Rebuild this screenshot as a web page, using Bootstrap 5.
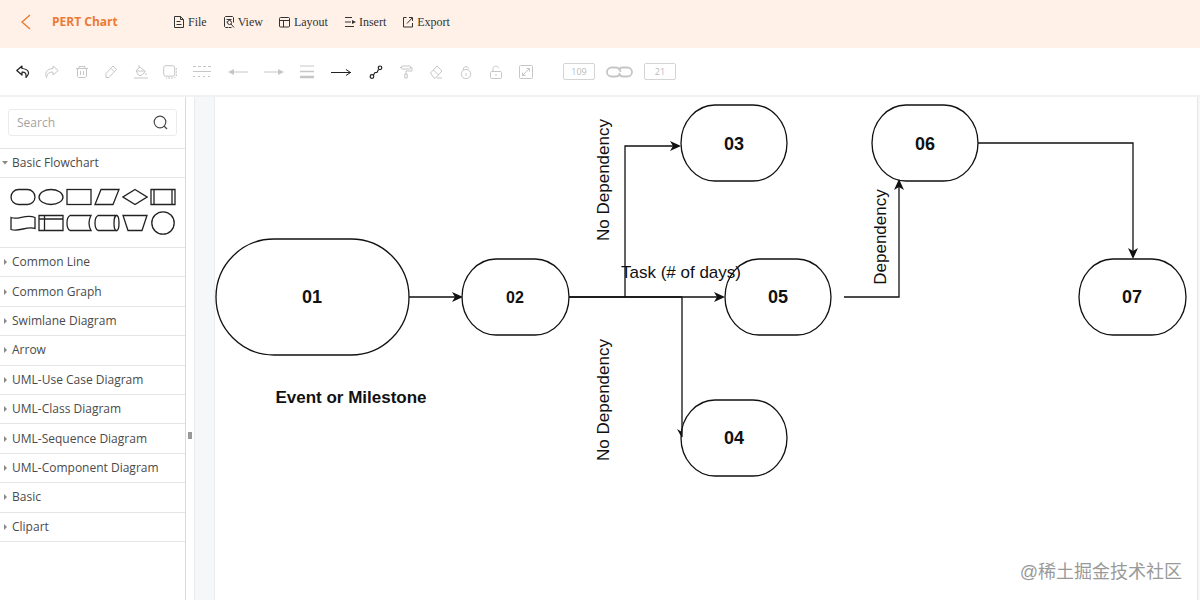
<!DOCTYPE html>
<html lang="en">
<head>
<meta charset="utf-8">
<meta name="viewport" content="width=device-width, initial-scale=1">
<title>PERT Chart</title>
<link href="https://cdn.jsdelivr.net/npm/bootstrap@5.3.0/dist/css/bootstrap.min.css" rel="stylesheet">
<style>
  body { font-family: "Open Sans", "Noto Sans", sans-serif; font-size: 12px; color: #4a4a4a; }
  button { background: none; border: 0; padding: 0; color: inherit; }
  svg { display: block; flex-shrink: 0; fill: none; stroke: currentColor; }
  .app-head { height: 48px; background: #fff1e8; padding: 0 20px 4px; }
  .brand-link { color: #ec7a34; font: bold 12px/16px "Open Sans", sans-serif; gap: 20px; width: 153px; }
  .menu-item { font: 12px/16px "Liberation Serif", serif; color: #333; gap: 3px; }
  .menu-row { gap: 16px; }
  .tool-row { height: 49px; padding-left: 16px; border-bottom: 2px solid #f0f1f2; color: #c6c6c6; }
  .group-edit { width: 161px; margin-right: 15px; }
  .group-line { width: 159px; margin-right: 18px; }
  .group-style { width: 164px; margin-right: 30px; }
  .group-size { gap: 11px; }
  .is-on { color: #222; }
  .size-box { width: 32px; height: 17px; padding: 0; text-align: center; font-size: 9px; color: #bbb; border: 1px solid #d4d4d4; border-radius: 2px; background: #fff; }
  .side { width: 186px; border-right: 1px solid #d9d9d9; }
  .search-wrap { padding: 12px 8px; border-bottom: 1px solid #e4e4e4; }
  .search-box { height: 27px; border: 1px solid #ebebeb; border-radius: 3px; padding: 0 8px; }
  .search-box input { font-size: 12px; border: 0; outline: 0; min-width: 0; color: #444; }
  .search-box input::placeholder { color: #a3a3a3; }
  .section-btn { border-bottom: 1px solid #e6e6e6; gap: 4px; padding-left: 2px; text-align: left; line-height: 16px; }
  .section-open { height: 29px; }
  .section-list { height: 294px; }
  .palette { display: grid; grid-template-columns: repeat(6, 28px); grid-auto-rows: 26px; padding: 6px 9px 11px; border-bottom: 1px solid #e6e6e6; color: #222; stroke-width: 1.3; }
  .palette button { display: grid; place-items: center; }
  .caret { width: 6px; height: 6px; fill: #888; stroke: none; }
  .splitter { width: 8px; }
  .grip { width: 4px; height: 7px; background: #999; }
  .above { flex: 27; }
  .below { flex: 13; }
  .ruler { width: 21px; background: #f5f7f9; border-left: 1px solid #e9ebee; border-right: 1px solid #eaecee; }
  .board { background: #fff; min-width: 0; border-right: 1px solid #e6e6e6; }
  .edge { width: 2px; background: #f7f7f7; }
  .diagram { font-family: "Liberation Sans", Arial, sans-serif; font-size: 17px; stroke: #111; stroke-width: 1.3; }
  .diagram text { fill: #111; stroke: none; text-anchor: middle; }
  .diagram .num { font-weight: bold; font-size: 18px; }
  .diagram .num-sm { font-weight: bold; font-size: 16px; }
  .diagram .tip { fill: #111; stroke: none; }
  .credit { right: 15px; bottom: 15px; font: 18px/26px "Liberation Sans", "Noto Sans CJK SC", sans-serif; color: #999; }
</style>
</head>
<body class="vh-100 d-flex flex-column overflow-hidden">

<header class="app-head d-flex align-items-center flex-shrink-0">
  <a href="#" class="brand-link d-flex align-items-center text-decoration-none">
    <svg width="12" height="16" stroke-width="1.4"><path d="M10 1 2 8l8 7"/></svg>PERT Chart
  </a>
  <nav class="menu-row d-flex align-items-center">
    <button class="menu-item d-flex align-items-center"><svg width="12" height="12"><path d="M1.5 .5h6l3 3v8h-9zM7.500 .5v3h3M3.500 5.500h4M3.500 8.500h5"/></svg>File</button>
    <button class="menu-item d-flex align-items-center"><svg width="12" height="12"><path d="M5 11.500H2.500l-1-1v-9l1-1h7l1 1v5M3.500 3.500h5M3.500 6h1"/><circle cx="6.500" cy="6.500" r="2"/><path d="M8 8l3 3.500M5.500 11.500h3"/></svg>View</button>
    <button class="menu-item d-flex align-items-center"><svg width="12" height="12"><rect x=".5" y="1.500" width="10" height="9.500" rx="1"/><path d="M.5 4.500h10M4.500 4.500V11"/></svg>Layout</button>
    <button class="menu-item d-flex align-items-center"><svg width="12" height="12"><path d="M1 1.500h7M1 6h6M1 10.500h9"/><path d="M8 4l4 2-4 2z" fill="currentColor" stroke="none"/></svg>Insert</button>
    <button class="menu-item d-flex align-items-center"><svg width="12" height="12"><path d="M4.500 1.500h-3v9.500h9V7M7 1.500h3.500V5M10 2 5 7.500"/></svg>Export</button>
  </nav>
</header>

<div class="tool-row d-flex align-items-center flex-shrink-0" role="toolbar">
  <div class="group-edit d-flex justify-content-between align-items-center">
    <button class="is-on" aria-label="Undo"><svg width="14" height="14" stroke-width="1.2"><path d="M6 1 .8 5.500 6 10V7.200c3-.3 4.500 .8 4 5.300 4-3.500 3.500-8.500-4-9z" stroke-linejoin="round"/></svg></button>
    <button aria-label="Redo"><svg width="14" height="14"><path d="M8 1l5.200 4.500L8 10V7.200c-3-.3-5.500 .3-6.500 5.300C-.5 7 2 4 8 3.500z" stroke-linejoin="round"/></svg></button>
    <button aria-label="Delete"><svg width="14" height="14"><path d="M1 3.500h12M4 3.500v-2h6v2M2.500 3.500v8l1 1h7l1-1v-8M5.500 6v4M8.500 6v4"/></svg></button>
    <button aria-label="Pen"><svg width="14" height="14"><path d="M2 8.500 9 1l3.500 3.500-7.500 8H2zM7 3.500 10.500 7"/></svg></button>
    <button aria-label="Fill"><svg width="14" height="14"><path d="M5 0v3M2 6l4-4 5.500 4.500L7 10.500H5zM2 6h9M12 8v2M0 13h14"/></svg></button>
    <button aria-label="Shadow"><svg width="14" height="14"><rect x=".7" y=".7" width="11" height="10.500" rx="2"/><path d="M13.300 3v8l-2 2H3" stroke-dasharray="2 1"/></svg></button>
  </div>
  <div class="group-line d-flex justify-content-between align-items-center">
    <button aria-label="Line style"><svg width="20" height="14"><path d="M1 1.500h18" stroke-dasharray="3 2"/><path d="M1 6.500h18"/><path d="M1 11.500h18" stroke-dasharray="2 3"/></svg></button>
    <button aria-label="Line start"><svg width="20" height="14"><path d="M3 7h17"/><path d="M0 7l6-3v6z" fill="currentColor" stroke="none"/></svg></button>
    <button aria-label="Line end"><svg width="20" height="14"><path d="M0 7h17"/><path d="M20 7l-6-3v6z" fill="currentColor" stroke="none"/></svg></button>
    <button aria-label="Line width"><svg width="16" height="14"><path d="M1 1h14"/><path d="M1 6.500h14" stroke-width="1.5"/><path d="M1 12h14" stroke-width="2.5"/></svg></button>
    <button class="is-on" aria-label="Arrow"><svg width="20" height="14"><path d="M0 7.500h20M15 4.500l4.500 3-4.500 3"/></svg></button>
  </div>
  <div class="group-style d-flex justify-content-between align-items-center">
    <button class="is-on" aria-label="Connector"><svg width="14" height="14" stroke-width="1.2"><circle cx="3" cy="11.500" r="1.8"/><circle cx="11" cy="2.800" r="1.8"/><path d="M4.500 10 6 7.500h2L9.500 4.500"/></svg></button>
    <button aria-label="Format painter"><svg width="14" height="14"><rect x="2.500" y="1" width="9" height="3" rx="1"/><path d="M2.500 2.500H1M11.500 2.500H13V6H7v3M5.800 9h2.400v4H5.800z"/></svg></button>
    <button aria-label="Eraser"><svg width="14" height="14"><path d="M1.500 8 8 1l5 5-6.500 7H5zM4.500 5l5 5M8 13h5"/></svg></button>
    <button aria-label="Lock"><svg width="14" height="14"><circle cx="7" cy="9" r="4.700"/><path d="M4.500 5V3.500C4.500 1 9.500 1 9.500 3.500M7 8v3"/></svg></button>
    <button aria-label="Unlock"><svg width="14" height="14" stroke="#b8b8b8"><rect x="1.500" y="6.500" width="11" height="7" rx="1"/><path d="M4 6.500v-3C4 .5 9 .5 9.500 3M7 9v2"/></svg></button>
    <button aria-label="Resize"><svg width="14" height="14" stroke="#b0b0b0"><rect x=".5" y=".5" width="13" height="13" rx="1"/><path d="M3.500 10.500l7-7M7.500 3.500h3v3M3.500 7.500v3h3"/></svg></button>
  </div>
  <div class="group-size d-flex align-items-center">
    <input class="size-box" value="109" aria-label="Width">
    <button aria-label="Keep ratio"><svg width="27" height="12" stroke="#bdbdbd" stroke-width="1.800"><path d="M14 8c-1 2-2 2.500-4 2.500H5.500a4.500 4.500 0 0 1 0-9H10c3 0 4.500 2.500 4.500 4.500"/><path d="M12.500 4c1-2 2.500-2.500 4-2.500h5a4.500 4.500 0 0 1 0 9h-4.500c-2 0-3.500-1.500-4-3.500"/></svg></button>
    <input class="size-box" value="21" aria-label="Height">
  </div>
</div>

<main class="d-flex flex-grow-1 overflow-hidden">
  <aside class="side flex-shrink-0">
    <div class="search-wrap">
      <label class="search-box d-flex align-items-center">
        <input type="search" placeholder="Search" aria-label="Search" class="flex-grow-1 p-0">
        <svg width="15" height="15" stroke="#777" stroke-width="1.2"><circle cx="7" cy="7" r="5.800"/><path d="M11 11l3 3"/></svg>
      </label>
    </div>
    <button class="section-btn section-open d-flex align-items-center w-100"><svg class="caret"><path d="M0 1h6L3 4.500z"/></svg>Basic Flowchart</button>
    <div class="palette">
      <button aria-label="Terminator"><svg width="26" height="18"><rect x="1" y="1.500" width="24" height="15" rx="7.500"/></svg></button>
      <button aria-label="Ellipse"><svg width="26" height="18"><ellipse cx="13" cy="9" rx="12" ry="7.500"/></svg></button>
      <button aria-label="Process"><svg width="26" height="18"><rect x="1" y="1.500" width="24" height="15"/></svg></button>
      <button aria-label="Data"><svg width="26" height="18"><path d="M7 1.500h18l-6 15H1z"/></svg></button>
      <button aria-label="Decision"><svg width="26" height="18"><path d="M13 1.500 25 9l-12 7.500L1 9z"/></svg></button>
      <button aria-label="Predefined process"><svg width="26" height="18"><path d="M1 1.500h24v15H1zM4 1.500v15M22 1.500v15"/></svg></button>
      <button aria-label="Document"><svg width="26" height="18"><path d="M1 3.500c7 3 15-4 24 0v11c-8-3-16 4-24 1z"/></svg></button>
      <button aria-label="Internal storage"><svg width="26" height="18"><path d="M1 1.500h24v15H1zM6.500 1.500v15M1 5h24"/></svg></button>
      <button aria-label="Stored data"><svg width="26" height="18"><path d="M4 1.500h21q-4 7.500 0 15H4c-4-2-4-13 0-15z"/></svg></button>
      <button aria-label="Direct data"><svg width="26" height="18"><path d="M4 1.500h18.500v15H4c-4-2-4-13 0-15z"/><ellipse cx="22.500" cy="9" rx="2.500" ry="7.500" fill="#fff"/></svg></button>
      <button aria-label="Manual operation"><svg width="26" height="18"><path d="M1 1.500h24l-5 15H6z"/></svg></button>
      <button aria-label="Circle"><svg width="26" height="24"><circle cx="13" cy="12" r="11.200"/></svg></button>
    </div>
    <div class="section-list d-flex flex-column">
      <button class="section-btn d-flex align-items-center flex-fill"><svg class="caret"><path d="M2 0v6l3-3z"/></svg>Common Line</button>
      <button class="section-btn d-flex align-items-center flex-fill"><svg class="caret"><path d="M2 0v6l3-3z"/></svg>Common Graph</button>
      <button class="section-btn d-flex align-items-center flex-fill"><svg class="caret"><path d="M2 0v6l3-3z"/></svg>Swimlane Diagram</button>
      <button class="section-btn d-flex align-items-center flex-fill"><svg class="caret"><path d="M2 0v6l3-3z"/></svg>Arrow</button>
      <button class="section-btn d-flex align-items-center flex-fill"><svg class="caret"><path d="M2 0v6l3-3z"/></svg>UML-Use Case Diagram</button>
      <button class="section-btn d-flex align-items-center flex-fill"><svg class="caret"><path d="M2 0v6l3-3z"/></svg>UML-Class Diagram</button>
      <button class="section-btn d-flex align-items-center flex-fill"><svg class="caret"><path d="M2 0v6l3-3z"/></svg>UML-Sequence Diagram</button>
      <button class="section-btn d-flex align-items-center flex-fill"><svg class="caret"><path d="M2 0v6l3-3z"/></svg>UML-Component Diagram</button>
      <button class="section-btn d-flex align-items-center flex-fill"><svg class="caret"><path d="M2 0v6l3-3z"/></svg>Basic</button>
      <button class="section-btn d-flex align-items-center flex-fill"><svg class="caret"><path d="M2 0v6l3-3z"/></svg>Clipart</button>
    </div>
  </aside>
  <div class="splitter d-flex flex-column align-items-center flex-shrink-0">
    <div class="above"></div><div class="grip"></div><div class="below"></div>
  </div>
  <div class="ruler flex-shrink-0"></div>

  <section class="board flex-grow-1 position-relative overflow-hidden">
    <svg class="diagram" width="100%" height="100%">
      <!-- links -->
      <path d="M194 200h48M354 200h150M410 200V49h52M467 200v140M629 200h55V88M763 46h155v110"/>
      <path d="M354 200h113" stroke-width="1.6"/>
      <g class="tip">
        <path d="M248 200l-11-5 3 5-3 5z"/>
        <path d="M466 49l-11-5 3 5-3 5z"/>
        <path d="M510 200l-11-5 3 5-3 5z"/>
        <path d="M684 82l-5 11 5-3 5 3z"/>
        <path d="M918 162l-5-11 5 3 5-3z"/>
        <path d="M462 332l5 3v6z"/>
      </g>
      <!-- events -->
      <rect x="1" y="142" width="193" height="116" rx="58"/>
      <rect x="247" y="162" width="107" height="76" rx="34" ry="38"/>
      <rect x="466" y="8" width="106" height="76" rx="34" ry="38"/>
      <rect x="466" y="303" width="106" height="76" rx="34" ry="38"/>
      <rect x="510" y="162" width="106" height="76" rx="34" ry="38"/>
      <rect x="657" y="8" width="106" height="76" rx="34" ry="38"/>
      <rect x="864" y="162" width="107" height="76" rx="34" ry="38"/>
      <text class="num" x="97" y="206">01</text>
      <text class="num-sm" x="300" y="206">02</text>
      <text class="num" x="519" y="53">03</text>
      <text class="num" x="519" y="347">04</text>
      <text class="num" x="563" y="206">05</text>
      <text class="num" x="710" y="53">06</text>
      <text class="num" x="917" y="206">07</text>
      <text x="466" y="181">Task (# of days)</text>
      <text x="136" y="306" font-weight="bold">Event or Milestone</text>
      <text transform="translate(394 83) rotate(-90)">No Dependency</text>
      <text transform="translate(394 303) rotate(-90)">No Dependency</text>
      <text transform="translate(671 140) rotate(-90)">Dependency</text>
    </svg>
    <div class="credit position-absolute">@稀土掘金技术社区</div>
  </section>
  <div class="edge flex-shrink-0"></div>
</main>

<script src="https://cdn.jsdelivr.net/npm/bootstrap@5.3.0/dist/js/bootstrap.bundle.min.js"></script>
</body>
</html>
